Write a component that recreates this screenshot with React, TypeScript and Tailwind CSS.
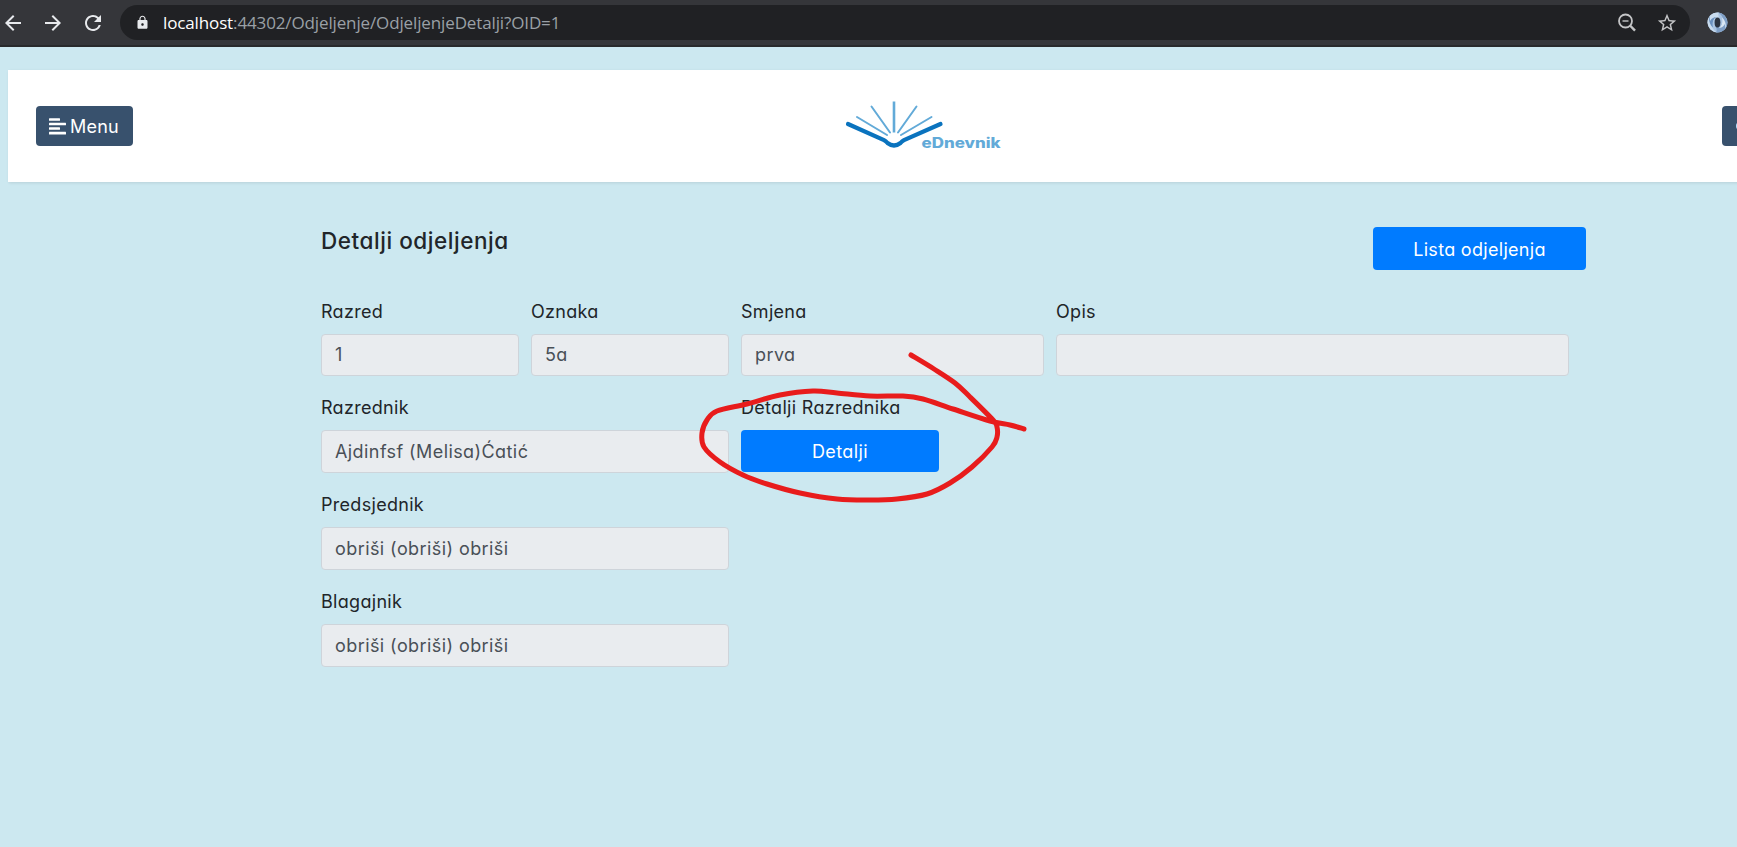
import { MdArrowBack, MdArrowForward, MdRefresh, MdLock, MdStarBorder } from "react-icons/md";

function Toolbar() {
  return (
    <div className="flex h-[47px] w-full shrink-0 items-start border-b-2 border-[#28292b] bg-[#35363a] text-[#e8eaed]">
      <div className="flex h-[45px] w-[120px] shrink-0 items-center">
        <MdArrowBack className="ml-[1px] size-6" />
        <MdArrowForward className="ml-4 size-6" />
        <MdRefresh className="ml-4 size-6" />
      </div>
      <div className="mt-[5px] flex h-[35px] w-[1570px] shrink-0 items-center rounded-full bg-[#202124] pl-[15px] pr-[12px]">
        <MdLock className="size-[15px]" />
        <div className="ml-[13px] whitespace-nowrap font-['Open_Sans','Noto_Sans',sans-serif] text-[17px] tracking-[-0.13px] text-[#9aa0a6]">
          <span className="text-white">localhost</span>:44302/Odjeljenje/OdjeljenjeDetalji?OID=1
        </div>
        <svg className="ml-auto size-5 text-[#c4c5c7]" viewBox="0 0 20 20" fill="none" stroke="currentColor" strokeWidth="1.8">
          <circle cx="8.5" cy="8" r="6.5" />
          <path d="M5.5 8h6" strokeWidth="1.4" />
          <path d="M13 12.5l5 5.2" strokeWidth="2.4" />
        </svg>
        <MdStarBorder className="ml-[19px] size-[22px] text-[#c4c5c7]" />
      </div>
      <svg className="ml-[17px] mt-3 size-[21px] shrink-0" viewBox="0 0 21 21">
        <circle cx="10.5" cy="10.5" r="10" fill="#a9c4e2" />
        <path d="M12 0.6C5 0 0 5 .6 11C1.2 16 5 20 10 20.4C5 17.5 4 13 6 9.5C7.5 6.5 10 5.5 12.5 6.5C11 4 11 2 12 .6Z" fill="#c9dcee" />
        <path d="M9 20.4C16 21 21 16 20.4 10C19.8 5 16 1 11 .6C16 3.5 17 8 15 11.5C13.5 14.5 11 15.5 8.5 14.5C10 17 10 19 9 20.4Z" fill="#7f9fc6" />
        <path d="M3 4C1 8 3 13 6 15.5C5 11 6 7 9.5 5C7 5 5 6 3 9Z" fill="#6b91bf" />
        <path d="M18 17C20 13 18 8 15 5.5C16 10 15 14 11.5 16C14 16 16 15 18 12Z" fill="#dbe8f4" />
        <ellipse cx="10.5" cy="10.5" rx="2.9" ry="5" fill="#2b3340" />
      </svg>
    </div>
  );
}

function Logo() {
  return (
    <svg className="h-[60px] w-[170px]" viewBox="0 0 170 60" fill="none" strokeLinecap="round">
      <g stroke="#62aad8" strokeWidth="2">
        <path d="M49 2.5v31" strokeWidth="2.6" strokeLinecap="butt" />
        <path d="M26.5 7.5l18.5 26M71.5 7.5l-18.5 26" />
        <path d="M12 18l30 18M86.500 18l-30.500 18" />
      </g>
      <path d="M3 25L39 41.2Q41 42.2 42.5 44Q49 49 55.5 44Q57 42.2 59 41.2L95.5 25" stroke="#0a73be" strokeWidth="4.2" />
      <text x="76.5" y="48.5" fill="#62aad8" className="font-['Inter',sans-serif] text-[14px] font-extrabold" textLength="79" lengthAdjust="spacingAndGlyphs">eDnevnik</text>
    </svg>
  );
}

function MenuIcon() {
  return (
    <svg className="h-[17px] w-[17px]" viewBox="0 0 17 17" fill="currentColor">
      <rect x="0" y="0.2" width="11" height="2.5" rx="0.5" />
      <rect x="0" y="4.8" width="17" height="2.5" rx="0.5" />
      <rect x="0" y="9.2" width="11" height="2.5" rx="0.5" />
      <rect x="0" y="13.8" width="17" height="2.7" rx="0.5" />
    </svg>
  );
}

function Header() {
  return (
    <header className="ml-2 mt-[23px] flex h-[112px] w-[1840px] shrink-0 items-start bg-white pl-7 pt-9 shadow-[1px_1px_3px_rgba(0,0,0,0.1)]">
      <button className="flex h-10 w-[97px] shrink-0 items-center rounded-[4px] bg-[#38516d] pl-[13px] text-[18px] text-white">
        <MenuIcon />
        <span className="ml-1 tracking-[0.2px]">Menu</span>
      </button>
      <div className="-mt-[7px] ml-[712px] shrink-0">
        <Logo />
      </div>
      <button className="ml-[707px] flex h-10 w-[97px] shrink-0 items-center rounded-[4px] bg-[#38516d] pl-[14px]">
        <span className="h-2 w-4 rounded-full bg-[#b8e2ff]" />
      </button>
    </header>
  );
}

function Label({ children }: { children: string }) {
  return (
    <label className="h-[36px] whitespace-nowrap font-[380] leading-[28px] tracking-[0.3px]">{children}</label>
  );
}

function Field({ label, value, width }: { label: string; value: string; width: string }) {
  return (
    <div className={`flex shrink-0 flex-col ${width}`}>
      <Label>{label}</Label>
      <div className="flex h-[42.75px] items-center whitespace-nowrap rounded-[4px] border border-[#ced4da] bg-[#e9ecef] px-[13px] font-[380] tracking-[0.42px] text-[#495057]">
        {value}
      </div>
    </div>
  );
}

type Point = [number, number];

const pen: Point[] = [
  [231, 25], [254, 39], [275, 53], [290, 67], [313, 90], [317, 97], [317, 107], [312, 117], [292, 137],
  [270, 153], [247, 164], [217, 169], [190, 170], [157, 169], [120, 163], [87, 154], [63, 145], [40, 132],
  [24, 117], [22, 103], [27, 90], [37, 81], [67, 74], [100, 65], [133, 61], [157, 63], [190, 66],
  [223, 66], [243, 69], [273, 79], [310, 91], [330, 95], [344, 99],
];

// Catmull-Rom spline through the pen points, as cubic Bézier segments.
function smooth(points: Point[]) {
  let d = `M${points[0][0]} ${points[0][1]}`;
  for (let i = 0; i < points.length - 1; i++) {
    const p0 = points[Math.max(i - 1, 0)];
    const p1 = points[i];
    const p2 = points[i + 1];
    const p3 = points[Math.min(i + 2, points.length - 1)];
    d += `C${p1[0] + (p2[0] - p0[0]) / 6} ${p1[1] + (p2[1] - p0[1]) / 6} ${p2[0] - (p3[0] - p1[0]) / 6} ${p2[1] - (p3[1] - p1[1]) / 6} ${p2[0]} ${p2[1]}`;
  }
  return d;
}

export default function App() {
  return (
    <div className="flex h-[847px] w-[1737px] flex-col overflow-hidden bg-[#cce8f0] font-['Inter',sans-serif] text-[18px] text-[#212529] [font-feature-settings:'cv11']">
      <Toolbar />
      <Header />
      <main className="relative ml-[321px] mt-[45px] w-[1265px]">
        <div className="flex items-start justify-between">
          <h5 className="whitespace-nowrap text-[22.5px] font-medium leading-[27px] tracking-[0.55px]">Detalji odjeljenja</h5>
          <button className="h-[43px] w-[213px] rounded-[4px] bg-[#007bff] pt-px tracking-[0.3px] text-white">Lista odjeljenja</button>
        </div>
        <div className="mt-[27.6px] flex flex-col gap-[18px]">
          <div className="flex gap-3">
            <Field label="Razred" value="1" width="w-[198px]" />
            <Field label="Oznaka" value="5a" width="w-[198px]" />
            <Field label="Smjena" value="prva" width="w-[303px]" />
            <Field label="Opis" value="" width="w-[513px]" />
          </div>
          <div className="flex gap-3">
            <Field label="Razrednik" value="Ajdinfsf (Melisa)Ćatić" width="w-[408px]" />
            <div className="flex w-[198px] flex-col">
              <Label>Detalji Razrednika</Label>
              <button className="h-[42px] rounded-[4px] bg-[#007bff] tracking-[0.4px] text-white">Detalji</button>
            </div>
          </div>
          <Field label="Predsjednik" value="obriši (obriši) obriši" width="w-[408px]" />
          <Field label="Blagajnik" value="obriši (obriši) obriši" width="w-[408px]" />
        </div>
        <svg className="pointer-events-none absolute left-[359px] top-[103px] h-[190px] w-[370px]" viewBox="0 0 370 190" fill="none" stroke="#e81c1c" strokeWidth="5" strokeLinecap="round" strokeLinejoin="round">
          <path d={smooth(pen)} />
        </svg>
      </main>
    </div>
  );
}
